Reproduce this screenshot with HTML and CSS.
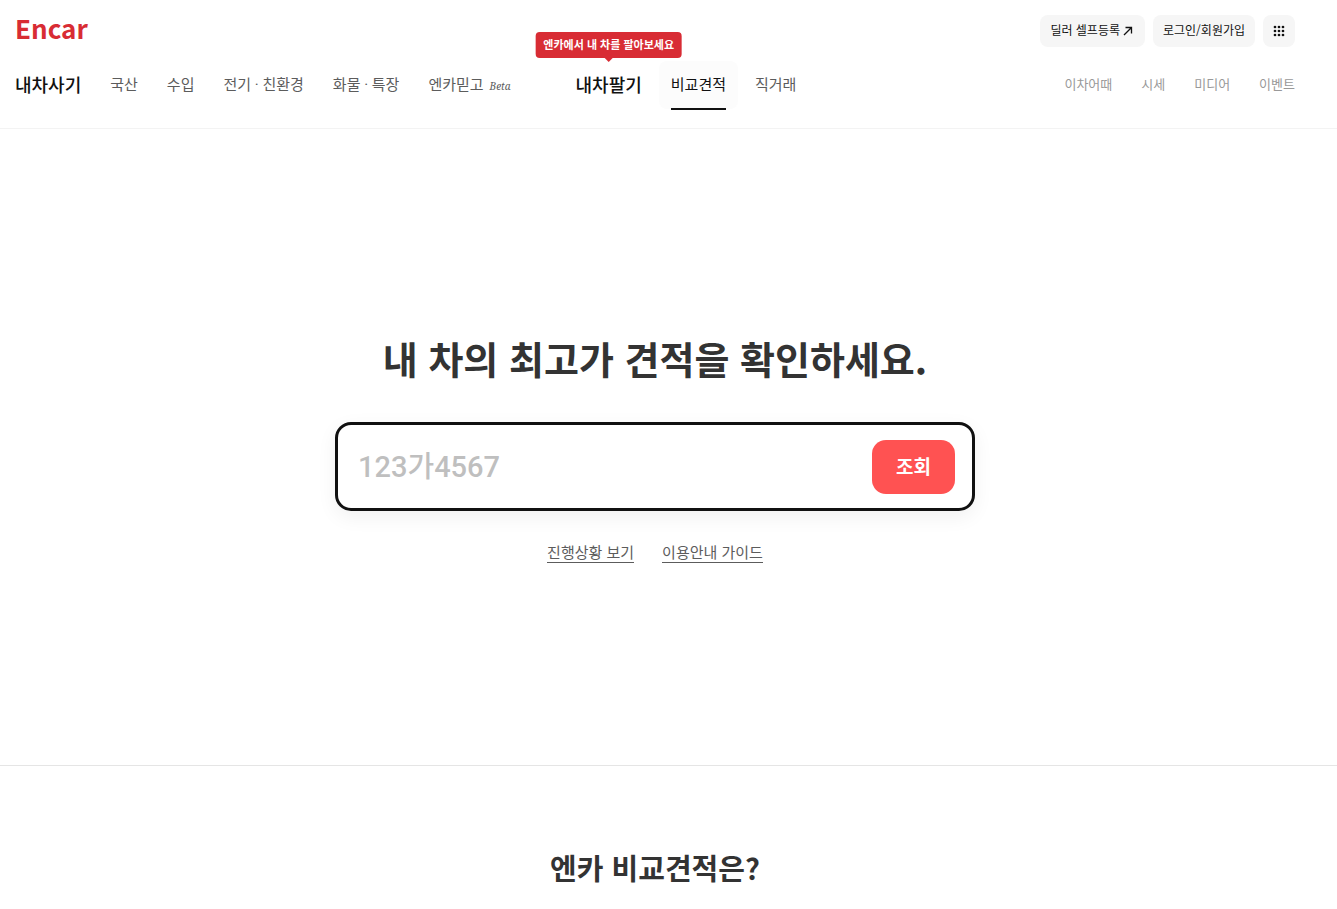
FILE: index.html
```html
<!DOCTYPE html>
<html lang="ko">
<head>
<meta charset="utf-8">
<meta name="viewport" content="width=device-width, initial-scale=1">
<title>Encar 비교견적</title>
<link rel="stylesheet" href="styles.css">
</head>
<body>
<header class="header">
  <div class="topbar">
    <a class="logo" href="#">Encar</a>
    <div class="actions">
      <a class="chip" href="#">딜러 셀프등록
        <svg class="arrow" viewBox="0 0 10 10" width="10" height="10" aria-hidden="true"><path d="M1 9 8.3 1.7M2.5 1.5h6v6" fill="none" stroke="currentColor" stroke-width="1.3"/></svg>
      </a>
      <a class="chip" href="#">로그인/회원가입</a>
      <button class="chip chip-icon" type="button" aria-label="전체 메뉴">
        <svg viewBox="0 0 12 12" width="12" height="12" fill="currentColor" aria-hidden="true"><circle cx="2" cy="2" r="1.35"/><circle cx="6" cy="2" r="1.35"/><circle cx="10" cy="2" r="1.35"/><circle cx="2" cy="6" r="1.35"/><circle cx="6" cy="6" r="1.35"/><circle cx="10" cy="6" r="1.35"/><circle cx="2" cy="10" r="1.35"/><circle cx="6" cy="10" r="1.35"/><circle cx="10" cy="10" r="1.35"/></svg>
      </button>
    </div>
  </div>
  <div class="navbar">
    <nav class="nav">
      <a class="nav-title" href="#">내차사기</a>
      <a href="#">국산</a>
      <a href="#">수입</a>
      <a href="#">전기 · 친환경</a>
      <a href="#">화물 · 특장</a>
      <a class="trust" href="#">엔카믿고<em class="beta">Beta</em></a>
    </nav>
    <nav class="nav">
      <a class="nav-title sell" href="#">내차팔기<span class="tip">엔카에서 내 차를 팔아보세요</span></a>
      <a class="active" href="#"><span>비교견적</span></a>
      <a href="#">직거래</a>
    </nav>
    <nav class="nav subnav">
      <a href="#">이차어때</a>
      <a href="#">시세</a>
      <a href="#">미디어</a>
      <a href="#">이벤트</a>
    </nav>
  </div>
</header>
<main>
  <section class="hero">
    <h1 class="hero-title">내 차의 최고가 견적을 확인하세요.</h1>
    <form class="search">
      <input class="plate" type="text" placeholder="123가4567" aria-label="차량번호">
      <button class="submit" type="button">조회</button>
    </form>
    <div class="links">
      <a href="#">진행상황 보기</a>
      <a href="#">이용안내 가이드</a>
    </div>
  </section>
  <section class="about">
    <h2 class="about-title">엔카 비교견적은?</h2>
  </section>
</main>
</body>
</html>
```
FILE: styles.css
```css
* { box-sizing: border-box; }
body {
  margin: 0;
  background: #fff;
  color: #333;
  font-family: "Noto Sans CJK KR", sans-serif;
  font-size: 15px;
}
a { color: inherit; text-decoration: none; }
button, input { font: inherit; border: 0; }

.header {
  padding: 15px 42px 19px 15px;
  border-bottom: 1px solid #f3f3f3;
}
.topbar { display: flex; justify-content: space-between; height: 32px; }
.logo {
  color: #d82c34;
  font-size: 26px;
  font-weight: 700;
  line-height: 26px;
}
.actions { display: flex; gap: 8px; }
.chip {
  display: flex;
  align-items: center;
  gap: 3px;
  padding: 0 10px;
  border-radius: 8px;
  background: #f6f6f6;
  color: #111;
  font-size: 12px;
  line-height: 30px;
  height: 32px;
}
a.chip { padding-bottom: 2px; }
.arrow { margin: 1px 2px 0 0; }

.navbar { display: flex; align-items: center; margin-top: 14px; height: 48px; }
.nav {
  display: flex;
  align-items: center;
  gap: 29px;
  margin-right: 65px;
  color: #5c5c5c;
  font-family: Roboto, "Noto Sans CJK KR", sans-serif;
  line-height: 48px;
  white-space: nowrap;
}
.nav a { height: 48px; }
.nav-title { color: #111; font-size: 18px; font-weight: 500; line-height: 50px; }
.trust { display: flex; gap: 6px; }
.beta { font-family: "Noto Serif", "DejaVu Serif", serif; font-size: 10px; line-height: 50px; }
.sell { position: relative; }
.tip {
  position: absolute;
  bottom: 51px;
  left: 50%;
  transform: translateX(-50%);
  height: 26px;
  padding: 0 8px;
  border-radius: 4px;
  background: #d82c34;
  color: #fff;
  font-family: "Noto Sans CJK KR", sans-serif;
  font-size: 11px;
  font-weight: 700;
  line-height: 24px;
}
.tip::after {
  content: "";
  position: absolute;
  top: 100%;
  left: 50%;
  margin-left: -4px;
  border: 4px solid transparent;
  border-top-color: #d82c34;
  border-bottom: 0;
}
.active {
  margin: 0 -12px;
  padding: 0 12px;
  border-radius: 8px;
  background: #fcfcfc;
  color: #111;
}
.active span { display: block; height: 49px; border-bottom: 2px solid #111; }
.subnav { margin: 0 0 0 auto; color: #999; font-size: 13px; }

.hero {
  display: flex;
  flex-direction: column;
  align-items: center;
  padding: 199px 27px 202px 0;
  border-bottom: 1px solid #e5e5e5;
}
.hero-title { margin: 0; font-size: 38px; font-weight: 700; line-height: 60px; }
.search {
  display: flex;
  align-items: center;
  width: 100%;
  max-width: 640px;
  margin-top: 34px;
  padding: 15px 17px 14px 20px;
  border: 3px solid #111;
  border-radius: 16px;
  background: #fff;
  box-shadow: 0 6px 20px rgba(0, 0, 0, .06);
}
.plate { flex: 1; min-width: 0; padding: 0; background: none; font-family: Roboto, "Noto Sans CJK KR", sans-serif; font-size: 29px; font-weight: 500; outline: 0; }
.plate::placeholder { color: #bfbfbf; opacity: 1; }
.submit {
  height: 54px;
  padding: 0 24px 2px;
  border-radius: 14px;
  background: #ff5252;
  color: #fff;
  font-size: 19px;
  font-weight: 700;
  line-height: 52px;
}
.links { display: flex; gap: 28px; margin-top: 31px; color: #5c5c5c; }
.links a { border-bottom: 1px solid #5c5c5c; line-height: 20px; }

.about { padding: 79px 27px 16px 0; text-align: center; }
.about-title { margin: 0; font-size: 29px; font-weight: 700; line-height: 44px; }
```
